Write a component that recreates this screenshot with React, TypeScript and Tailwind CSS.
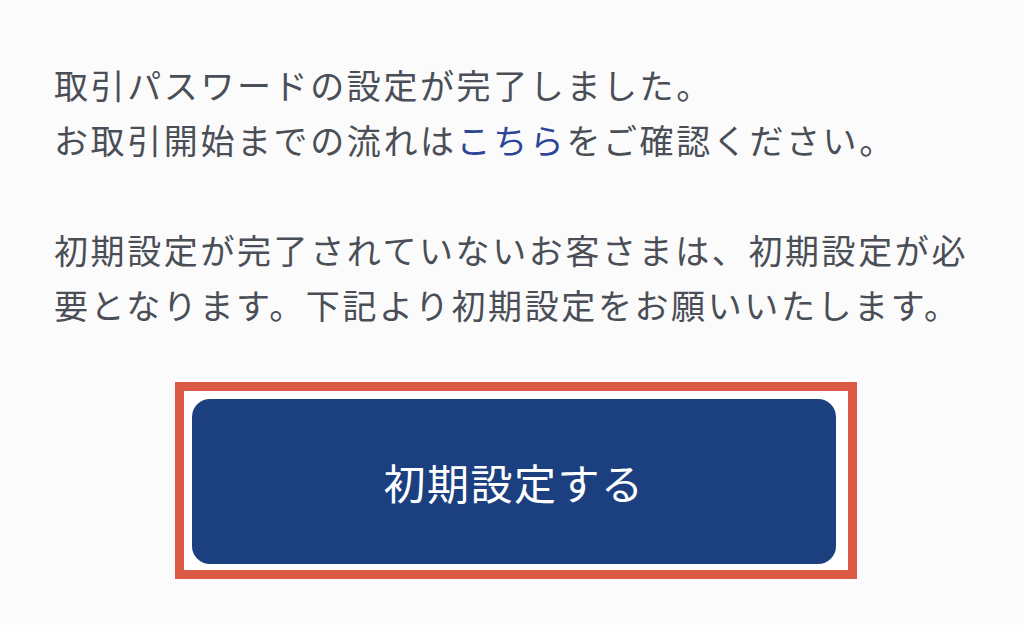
import React from 'react';

const font = { fontFamily: '"Noto Sans CJK JP", "Noto Sans", sans-serif' };

export default function App() {
  return (
    <div className="w-[1024px] h-[625px] bg-[#fbfbfb] overflow-hidden" style={font}>
      {/* 本文 */}
      <div className="pl-[54px] pt-[57px] text-[34px] leading-[55px] tracking-[2.6px] text-[#4a4e56] whitespace-nowrap">
        <p>取引パスワードの設定が完了しました。</p>
        <p>
          お取引開始までの流れは<span className="text-[#2c4596]">こちら</span>をご確認ください。
        </p>
        <p className="mt-[55px]">初期設定が完了されていないお客さまは、初期設定が必</p>
        <p>要となります。下記より初期設定をお願いいたします。</p>
      </div>

      {/* ボタン（赤枠） */}
      <div className="ml-[175px] mt-[50px] w-[682px] h-[197px] border-[9px] border-[#dc5a44] bg-white pl-[8px] pt-[8px] pr-[12px] pb-[6px]">
        <button className="w-full h-full rounded-[18px] bg-[#1c3f80] text-white text-[42px] tracking-[1.5px] flex items-center justify-center">
          初期設定する
        </button>
      </div>
    </div>
  );
}
